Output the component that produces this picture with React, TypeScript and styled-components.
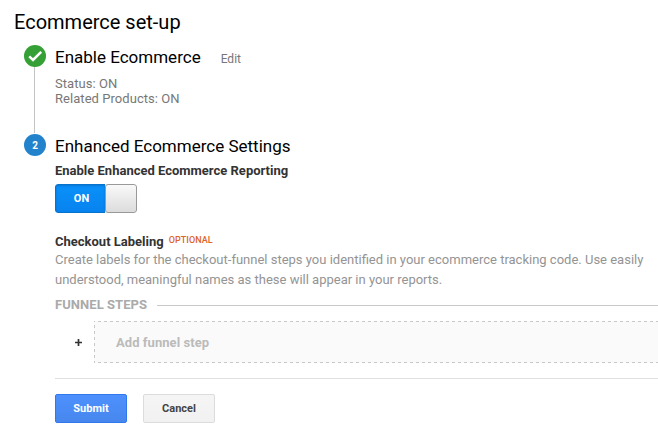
import React from "react";
import styled, { createGlobalStyle } from "styled-components";

const GlobalStyle = createGlobalStyle`
  * { box-sizing: border-box; }
  body {
    margin: 0;
    background: #fff;
    font-family: Roboto, "Liberation Sans", sans-serif;
    overflow: hidden;
  }
`;

const Page = styled.main`
  height: 440px;
  padding: 9px 0 0 14px;
  overflow: hidden;
`;

const Title = styled.h1`
  margin: 0;
  height: 36px;
  font-size: 20px;
  line-height: 26px;
  font-weight: 400;
  color: #000;
`;

const Step = styled.section<{ $height?: number }>`
  display: flex;
  gap: 9px;
  height: ${({ $height }) => ($height ? `${$height}px` : "auto")};
  padding-left: 10px;
`;

const Rail = styled.div`
  display: flex;
  flex-direction: column;
  flex: 0 0 22px;
`;

const RailLine = styled.div`
  flex: 1;
  width: 1px;
  margin: 0 0 1px 10px;
  background: #c4c4c4;
`;

const Badge = styled.div<{ $color: string }>`
  display: flex;
  align-items: center;
  justify-content: center;
  width: 22px;
  height: 22px;
  border-radius: 50%;
  background: ${({ $color }) => $color};
  color: #fff;
  font-size: 10px;
  font-weight: 700;
`;

const Content = styled.div`
  flex: 1;
  min-width: 0;
`;

const Heading = styled.div`
  display: flex;
  align-items: baseline;
  gap: 20px;
  height: 24px;
  line-height: 24px;
`;

const StepTitle = styled.h2`
  margin: 0;
  font-size: 17px;
  font-weight: 400;
  color: #000;
`;

const EditLink = styled.a`
  font-size: 12px;
  color: #777;
`;

const Status = styled.div`
  padding-top: 7px;
  font-size: 13px;
  line-height: 15px;
  letter-spacing: 0.05px;
  color: #777;
`;

const Label = styled.div`
  display: flex;
  gap: 5px;
  font-size: 13px;
  line-height: 16px;
  font-weight: 700;
  color: #333;
`;

const Optional = styled.span`
  font-size: 9px;
  line-height: 12px;
  font-weight: 500;
  letter-spacing: 0.05px;
  color: #dd6428;
`;

const Toggle = styled.button`
  display: flex;
  width: 82px;
  height: 29px;
  margin: 5px 0 21px;
  padding: 0;
  border: 0;
  border-radius: 3px;
  overflow: hidden;
  font-family: inherit;
`;

const ToggleOn = styled.span`
  display: flex;
  align-items: center;
  justify-content: center;
  width: 50px;
  height: 29px;
  padding-left: 2px;
  border: 1px solid #0873cc;
  border-right: 0;
  border-radius: 3px 0 0 3px;
  background: linear-gradient(#0a90fa, #0783ee);
  box-shadow: inset 0 1px 2px rgba(0, 60, 130, 0.3);
  color: #fff;
  font-size: 11px;
  font-weight: 700;
`;

const ToggleKnob = styled.span`
  width: 32px;
  height: 29px;
  border: 1px solid #999;
  border-radius: 3px;
  background: linear-gradient(#f9f9f9, #dcdcdc);
`;

const Settings = styled.div`
  padding-top: 5px;
`;

const Description = styled.p`
  margin: 0;
  font-size: 13px;
  line-height: 20px;
  color: #949494;
`;

const FunnelHeading = styled.div`
  display: flex;
  align-items: center;
  gap: 10px;
  height: 16px;
  margin-top: 7px;
  font-size: 13px;
  line-height: 14px;
  font-weight: 700;
  letter-spacing: 0.06px;
  color: #aaa;

  &::after {
    content: "";
    flex: 1;
    height: 1px;
    background: #c8c8c8;
  }
`;

const FunnelRow = styled.div`
  display: flex;
  align-items: center;
  height: 42px;
  margin-top: 8px;
`;

const AddIcon = styled.svg`
  flex: 0 0 7px;
  margin: 1px 12px 0 20px;
`;

const dash = "#c8c8c8 0 3px, transparent 3px 6px";

const AddStep = styled.div`
  flex: 1;
  height: 42px;
  padding-left: 22px;
  background:
    repeating-linear-gradient(90deg, ${dash}) 4px 0 / 600px 1px repeat-x,
    repeating-linear-gradient(90deg, ${dash}) 4px 100% / 600px 1px repeat-x,
    repeating-linear-gradient(180deg, ${dash}) 0 4px / 1px 60px repeat-y,
    #fafafa;
  font-size: 13px;
  line-height: 43px;
  letter-spacing: 0.06px;
  font-weight: 700;
  color: #bbb;
`;

const Actions = styled.div`
  display: flex;
  gap: 16px;
  margin-top: 15px;
  padding-top: 15px;
  border-top: 1px solid #e0e0e0;
`;

const Button = styled.button<{ $primary?: boolean }>`
  width: 72px;
  height: 29px;
  padding: 0;
  border: 1px solid ${({ $primary }) => ($primary ? "#3079ed" : "#dcdcdc")};
  border-radius: 2px;
  background: ${({ $primary }) =>
    $primary
      ? "linear-gradient(#4d90fe, #4787ed)"
      : "linear-gradient(#f5f5f5, #f1f1f1)"};
  color: ${({ $primary }) => ($primary ? "#fff" : "#444")};
  font-family: inherit;
  font-size: 11px;
  font-weight: 700;
`;

export default function App() {
  return (
    <>
      <GlobalStyle />
      <Page>
        <Title>Ecommerce set-up</Title>
        <Step $height={89}>
          <Rail>
            <Badge $color="#35a035">
              <svg width="22" height="22" viewBox="0 0 22 22" fill="none">
                <path d="M5.2 11.4 9 15 17.2 6.8" stroke="#fff" strokeWidth="2.5" />
              </svg>
            </Badge>
            <RailLine />
          </Rail>
          <Content>
            <Heading>
              <StepTitle>Enable Ecommerce</StepTitle>
              <EditLink>Edit</EditLink>
            </Heading>
            <Status>
              <div>Status: ON</div>
              <div>Related Products: ON</div>
            </Status>
          </Content>
        </Step>
        <Step>
          <Rail>
            <Badge $color="#2283cc">2</Badge>
          </Rail>
          <Content>
            <Heading>
              <StepTitle>Enhanced Ecommerce Settings</StepTitle>
            </Heading>
            <Settings>
              <Label>Enable Enhanced Ecommerce Reporting</Label>
              <Toggle type="button" aria-pressed="true">
                <ToggleOn>ON</ToggleOn>
                <ToggleKnob />
              </Toggle>
              <Label>
                Checkout Labeling <Optional>OPTIONAL</Optional>
              </Label>
              <Description>
                Create labels for the checkout-funnel steps you identified in your ecommerce tracking code. Use easily
                <br />
                understood, meaningful names as these will appear in your reports.
              </Description>
              <FunnelHeading>FUNNEL STEPS</FunnelHeading>
              <FunnelRow>
                <AddIcon width="7" height="7" viewBox="0 0 7 7">
                  <path d="M3.5 0v7M0 3.5h7" stroke="#333" strokeWidth="1.7" />
                </AddIcon>
                <AddStep>Add funnel step</AddStep>
              </FunnelRow>
              <Actions>
                <Button type="button" $primary>Submit</Button>
                <Button type="button">Cancel</Button>
              </Actions>
            </Settings>
          </Content>
        </Step>
      </Page>
    </>
  );
}
